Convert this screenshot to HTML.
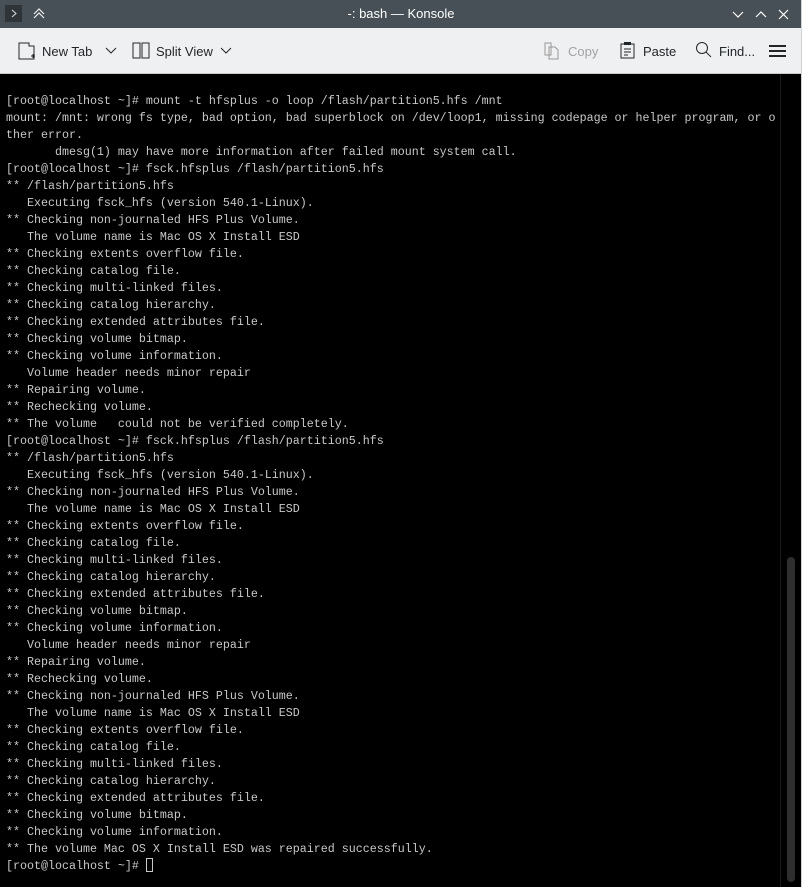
<!DOCTYPE html><html><head><style>
body{margin:0;width:802px;height:887px;overflow:hidden;background:#000;font-family:"Liberation Sans",sans-serif;position:relative}
.title{position:absolute;left:0;top:0;width:802px;height:28px;background:#475057;color:#fff;font-size:13px}
.tb{position:absolute;left:0;top:28px;width:802px;height:45px;background:#eff0f1;border-bottom:1px solid #c8cacc;font-size:13px;color:#232629}
.tb span{position:absolute;top:16px}
pre{position:absolute;left:6px;top:93px;margin:0;font-family:"Liberation Mono",monospace;font-size:11.67px;line-height:17px;color:#c8c8c8}
</style></head><body>
<div class="title">
<div style="position:absolute;left:5px;top:5px;width:17px;height:17px;background:#2e3438"></div>
<svg style="position:absolute;left:5px;top:5px" width="17" height="17"><path d="M7 5l4 3.5-4 3.5" stroke="#ddd" fill="none"/></svg>
<svg style="position:absolute;left:32px;top:6px" width="14" height="14"><path d="M2 8l5-5 5 5M2 12l5-5 5 5" stroke="#eee" fill="none" stroke-width="1.2"/></svg>
<div style="position:absolute;left:0;width:802px;top:6px;text-align:center">-: bash — Konsole</div>
<svg style="position:absolute;left:730px;top:8px" width="64" height="14"><path d="M3 4l5 5 5-5M26 9l5-5 5 5M49 2l9 9M58 2l-9 9" stroke="#fff" fill="none" stroke-width="1.2"/></svg>
</div>
<div class="tb">
<svg style="position:absolute;left:18px;top:14px" width="18" height="18"><path d="M1 1h10v3h5v13H1z" stroke="#232629" fill="none"/><path d="M13 14h4M15 12v4" stroke="#232629"/></svg>
<span style="left:42px">New Tab</span>
<svg style="position:absolute;left:105px;top:19px" width="12" height="8"><path d="M1 1l5 5 5-5" stroke="#232629" fill="none"/></svg>
<svg style="position:absolute;left:132px;top:14px" width="18" height="18"><rect x="1" y="1" width="7" height="15" stroke="#232629" fill="none"/><rect x="10" y="1" width="7" height="15" stroke="#232629" fill="none"/></svg>
<span style="left:156px">Split View</span>
<svg style="position:absolute;left:220px;top:19px" width="12" height="8"><path d="M1 1l5 5 5-5" stroke="#232629" fill="none"/></svg>
<svg style="position:absolute;left:544px;top:14px" width="16" height="18"><path d="M1 1h6v12H1zM5 5h6l3 3v9H5z" stroke="#999" fill="#eff0f1"/></svg>
<span style="left:568px;color:#a0a2a4">Copy</span>
<svg style="position:absolute;left:620px;top:13px" width="16" height="18"><rect x="1" y="3" width="13" height="14" stroke="#232629" fill="none"/><rect x="4" y="1" width="7" height="3" fill="#232629"/><path d="M4 8h7M4 11h7M4 14h4" stroke="#232629"/></svg>
<span style="left:643px">Paste</span>
<svg style="position:absolute;left:695px;top:13px" width="18" height="18"><circle cx="7" cy="7" r="5.5" stroke="#232629" fill="none"/><path d="M11 11l5 5" stroke="#232629"/></svg>
<span style="left:719px">Find...</span>
<svg style="position:absolute;left:769px;top:16px" width="18" height="14"><path d="M0 2h17M0 7h17M0 12h17" stroke="#232629" stroke-width="2"/></svg>
</div>
<div style="position:absolute;left:780px;top:74px;width:1px;height:813px;background:#1c1c1c"></div>
<div style="position:absolute;left:787px;top:557px;width:8px;height:325px;background:#2e2e2e;border-radius:4px"></div>
<div style="position:absolute;left:801px;top:0;width:1px;height:887px;background:#cfd1d3"></div>
<pre>[root@localhost ~]# mount -t hfsplus -o loop /flash/partition5.hfs /mnt
mount: /mnt: wrong fs type, bad option, bad superblock on /dev/loop1, missing codepage or helper program, or o
ther error.
       dmesg(1) may have more information after failed mount system call.
[root@localhost ~]# fsck.hfsplus /flash/partition5.hfs
** /flash/partition5.hfs
   Executing fsck_hfs (version 540.1-Linux).
** Checking non-journaled HFS Plus Volume.
   The volume name is Mac OS X Install ESD
** Checking extents overflow file.
** Checking catalog file.
** Checking multi-linked files.
** Checking catalog hierarchy.
** Checking extended attributes file.
** Checking volume bitmap.
** Checking volume information.
   Volume header needs minor repair
** Repairing volume.
** Rechecking volume.
** The volume   could not be verified completely.
[root@localhost ~]# fsck.hfsplus /flash/partition5.hfs
** /flash/partition5.hfs
   Executing fsck_hfs (version 540.1-Linux).
** Checking non-journaled HFS Plus Volume.
   The volume name is Mac OS X Install ESD
** Checking extents overflow file.
** Checking catalog file.
** Checking multi-linked files.
** Checking catalog hierarchy.
** Checking extended attributes file.
** Checking volume bitmap.
** Checking volume information.
   Volume header needs minor repair
** Repairing volume.
** Rechecking volume.
** Checking non-journaled HFS Plus Volume.
   The volume name is Mac OS X Install ESD
** Checking extents overflow file.
** Checking catalog file.
** Checking multi-linked files.
** Checking catalog hierarchy.
** Checking extended attributes file.
** Checking volume bitmap.
** Checking volume information.
** The volume Mac OS X Install ESD was repaired successfully.
[root@localhost ~]# <span style="display:inline-block;width:7px;height:14px;border:1px solid #c8c8c8;box-sizing:border-box;vertical-align:-3px"></span></pre>
</body></html>
